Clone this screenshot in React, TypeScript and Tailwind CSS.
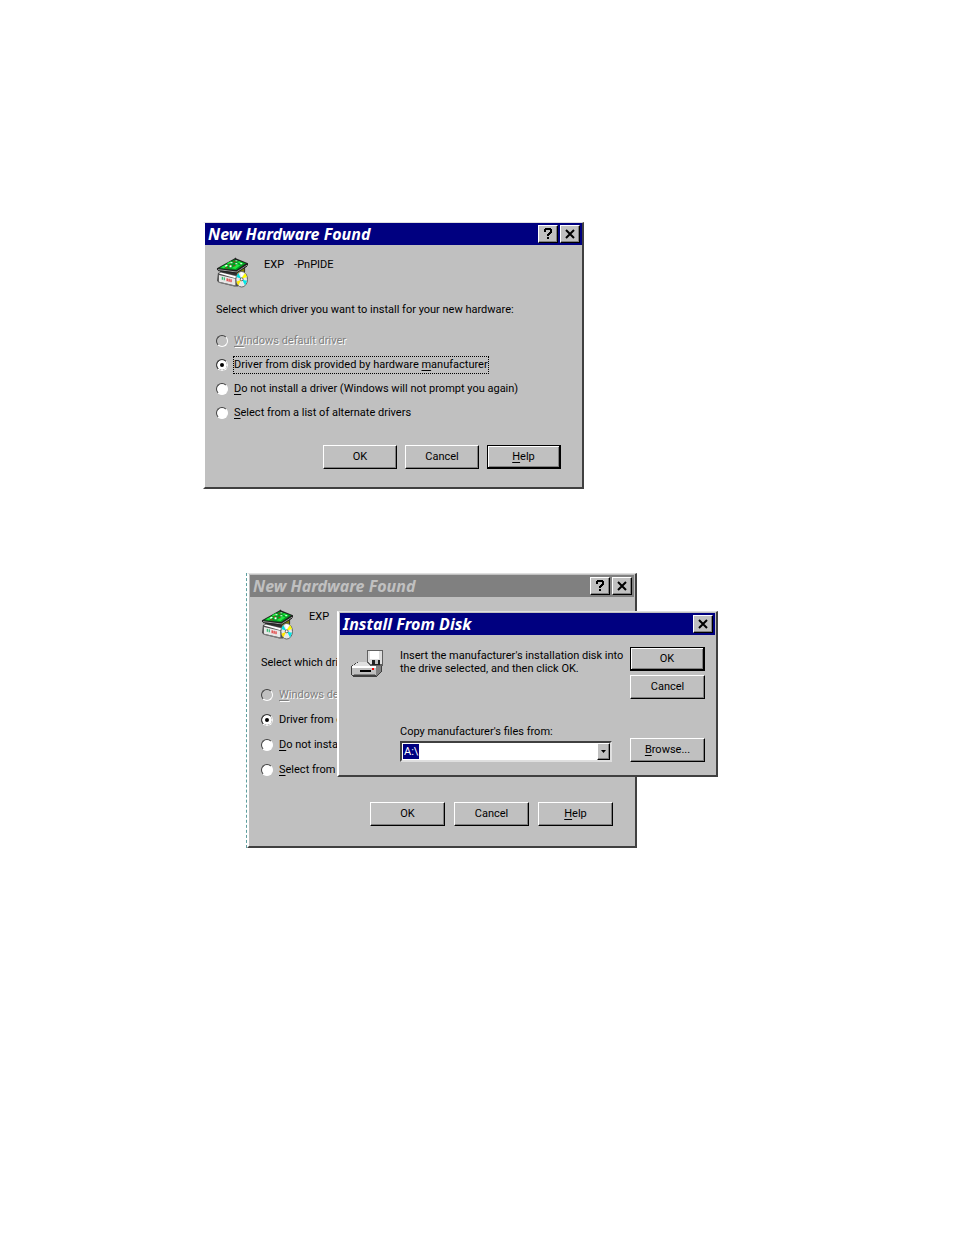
import React from "react";

type DialogProps = {
    title: string;
    inactive?: boolean;
    help?: boolean;
    className?: string;
    children: React.ReactNode;
};

const options = [
    { key: "W", rest: "indows default driver", disabled: true },
    { before: "Driver from disk provided by hardware ", key: "m", rest: "anufacturer" },
    { key: "D", rest: "o not install a driver (Windows will not prompt you again)" },
    { key: "S", rest: "elect from a list of alternate drivers" },
];

const TitleButton = ({ label, children }: { label: string; children: React.ReactNode }) => (
    <button
        type="button"
        aria-label={label}
        className="flex h-[18px] w-5 items-center justify-center border border-t-white border-l-white border-r-black border-b-black bg-[#c0c0c0] shadow-[inset_-1px_-1px_0_#808080]"
    >
        {children}
    </button>
);

const Dialog = ({ title, inactive, help, className, children }: DialogProps) => (
    <section
        className={
            "border-t border-l-2 border-r-2 border-b-2 border-t-[#dfdfdf] border-l-white border-r-[#404040] border-b-[#404040] bg-[#c0c0c0] " +
            (className || "")
        }
    >
        <header
            className={
                "flex h-[22px] items-center justify-between pr-[2px] pl-[3px] " +
                (inactive ? "bg-[#808080] text-[#c0c0c0]" : "bg-[#000080] text-white")
            }
        >
            <h2 className="font-['Noto_Sans',sans-serif] text-[16px] leading-[22px] font-bold whitespace-nowrap italic">
                {title}
            </h2>
            <div className="flex gap-[2px]">
                {help && (
                    <TitleButton label="What's this">
                        <svg width="10" height="12" viewBox="0 0 10 12" shapeRendering="crispEdges">
                            <path
                                d="M2 0h6v1h1v4H8v1H7v1H6v1H4V6h1V5h1V4h1V2H3v2H1V1h1zM4 9h2v2H4z"
                                fill="#000"
                            />
                        </svg>
                    </TitleButton>
                )}
                <TitleButton label="Close">
                    <svg width="10" height="10" viewBox="0 0 10 10">
                        <path d="M1 1l8 8M9 1L1 9" stroke="#000" strokeWidth="2" />
                    </svg>
                </TitleButton>
            </div>
        </header>
        {children}
    </section>
);

const Button = ({
    primary,
    className,
    children,
}: {
    primary?: boolean;
    className?: string;
    children: React.ReactNode;
}) => (
    <button
        type="button"
        className={
            "h-6 text-center leading-4 " +
            (primary
                ? "border border-r-2 border-b-2 border-black bg-[#c0c0c0] shadow-[inset_1px_1px_0_#fff,inset_-1px_-1px_0_#808080] "
                : "border border-t-white border-l-white border-r-black border-b-black bg-[#c0c0c0] shadow-[inset_-1px_-1px_0_#808080] ") +
            (className || "w-[75px]")
        }
    >
        {children}
    </button>
);

const HardwareIcon = () => (
    <svg width="32" height="32" viewBox="0 0 33 32" className="shrink-0" aria-hidden="true">
        {/* box under the card */}
        <path d="M4 14l18-1 8-5v7l-8 4-17-3z" fill="#303030" />
        <path d="M21 14l8-4v5l-7 3z" fill="#808000" />
        <path d="M21 13l8-4v2l-8 4z" fill="#ffffc0" />
        {/* expansion card */}
        <path d="M1 11L19 1l1-1 1 1 12 5v2L22 15 1 13z" fill="#202020" />
        <path d="M3 11L19 2l12 4-10 7z" fill="#00a020" />
        <path d="M5 10l6-3 2 1-5 3zM11 6l4-2 2 1-4 2zM16 11l6-4 3 1-5 4zM24 4l4 2-2 1-4-2z" fill="#20e840" />
        <path d="M9 8.500l2-1 1 1-2 1zM15 5h2v1h-2zM20 3h2v1h-2zM14 8h2v2h-2zM20 6h2v1h-2zM25 6h2v1h-2z" fill="#fff" />
        <path d="M10 10h2v1h-2zM13 7h2v1h-2zM18 4h2v1h-2zM18 8h2v1h-2z" fill="#c02020" />
        <path d="M2 12.500l19 2.500 11-7" fill="none" stroke="#c0c0c0" strokeWidth="0.800" />
        <path d="M2 13.500l19 2.500 11-7" fill="none" stroke="#202020" />
        {/* drive */}
        <path d="M2 16l3-1 18 4v11h-4L3 26l-2-2z" fill="#505050" />
        <path d="M3 16.500l2-1 17 4-2 2z" fill="#fff" />
        <path d="M3 18l17 4v7L3 25z" fill="#e8e8e8" />
        <path d="M6.500 20v3M8.500 20.500v3" stroke="#00b050" />
        <path d="M11.500 21.500v3M13.500 22v3M15.500 22.500v3" stroke="#e00000" />
        <path d="M3 25.500l17 4" stroke="#808080" />
        {/* disc */}
        <ellipse cx="26.500" cy="22.500" rx="6" ry="8" fill="#e8e8e8" stroke="#606060" />
        <path d="M26 22l-1-7 4 1z" fill="#fff" />
        <path d="M26 22l4-6 2 4z" fill="#ffff00" />
        <path d="M26 22l-5-2 2-4z" fill="#00e0e0" />
        <path d="M27 23l5 1-2 5z" fill="#00e8e8" />
        <path d="M26 23l-3 6-2-4z" fill="#ffe800" />
        <circle cx="26.500" cy="22.500" r="1.500" fill="#fff" stroke="#404040" strokeWidth="0.800" />
    </svg>
);

const DriveIcon = () => (
    <svg width="33" height="28" viewBox="0 0 33 28" className="shrink-0" aria-hidden="true" shapeRendering="crispEdges">
        <path d="M0 16l7-4h24v9l-5 6H2l-2-2z" fill="#404040" />
        <path d="M1 16l7-4h22l-6 4z" fill="#e0e0e0" />
        <path d="M1 17h24v8H1z" fill="#c0c0c0" />
        <path d="M25 16l5-4v9l-5 5z" fill="#808080" />
        <path d="M1 16h24v2H1z" fill="#fff" />
        <path d="M9 20h11v2H9z" fill="#000" />
        <path d="M3 24h21v1H3z" fill="#808080" />
        <path d="M21 18h2v2h-2z" fill="#f00" />
        {/* floppy */}
        <path d="M16 0h15l1 1v15H19l-3-3z" fill="#606060" />
        <path d="M17 1h14v13H19l-2-2z" fill="#dfdfdf" />
        <path d="M19 1h9v8h-9z" fill="#fff" />
        <path d="M21 10h8v5h-8z" fill="#202020" />
        <path d="M24 10h3v4h-3z" fill="#c0c0c0" />
    </svg>
);

const HardwareForm = ({ name, wide }: { name: string; wide?: boolean }) => (
    <form className={wide ? "px-[11px] pt-3 pb-[19px]" : "px-[11px] pt-3 pb-[18px]"}>
        <div className="flex items-start gap-4">
            <HardwareIcon />
            <p className="flex gap-[10px] leading-4">
                <span>EXP</span>
                <span>-PnPIDE</span>
            </p>
        </div>
        <fieldset>
            <legend className={(wide ? "pt-[14px]" : "pt-[13px]") + " whitespace-nowrap"}>
                Select which driver you want to install for your new hardware:
            </legend>
            <div className="pt-[11px]">
                {options.map((option, i) => (
                    <div
                        key={option.key}
                        className={(wide ? "h-[25px]" : "h-6") + " flex items-center gap-[6px]"}
                    >
                        <input
                            type="radio"
                            id={name + i}
                            name={name}
                            disabled={option.disabled}
                            defaultChecked={i === 1}
                            className="size-3 shrink-0 appearance-none rounded-full border border-t-[#404040] border-r-white border-b-white border-l-[#404040] bg-white checked:bg-black checked:shadow-[inset_0_0_0_3px_#fff] disabled:bg-[#c0c0c0]"
                        />
                        <label
                            htmlFor={name + i}
                            className={
                                "leading-4 whitespace-nowrap " +
                                (option.disabled ? "text-[#808080] [text-shadow:1px_1px_0_#fff] " : "") +
                                (i === 1 && !wide ? "outline outline-dotted outline-black" : "")
                            }
                        >
                            {option.before}
                            <u className="underline-offset-2">{option.key}</u>
                            {option.rest}
                        </label>
                    </div>
                ))}
            </div>
        </fieldset>
        <div className={(wide ? "gap-[9px]" : "gap-2") + " flex justify-end pt-5 pr-[10px]"}>
            <Button className={wide ? "w-[75px]" : "w-[74px]"}>OK</Button>
            <Button className={wide ? "w-[75px]" : "w-[74px]"}>Cancel</Button>
            <Button primary={!wide} className={wide ? "w-[75px]" : "w-[74px]"}>
                <u className="underline-offset-2">H</u>elp
            </Button>
        </div>
    </form>
);

const App = () => {
    return (
        <main className="bg-white pt-[222px] pb-12 pl-[203px] font-[Roboto,sans-serif] text-[11px] leading-4 text-black">
            <Dialog title="New Hardware Found" help className="w-full max-w-[381px]">
                <HardwareForm name="driver" />
            </Dialog>

            <div className="relative mt-[84px] ml-[43px] w-full max-w-[391px]">
                <div className="border-l border-dashed border-[#5f9f9f]">
                    <Dialog title="New Hardware Found" inactive help className="p-[1px]">
                        <HardwareForm name="driver-behind" wide />
                    </Dialog>
                </div>

                <Dialog
                    title="Install From Disk"
                    className="absolute top-[38px] left-[91px] w-[381px] p-[1px]"
                >
                    <form className="flex justify-between pt-3 pr-[10px] pb-3 pl-[11px]">
                        <div className="flex gap-4">
                            <div className="pt-[3px]">
                                <DriveIcon />
                            </div>
                            <div className="flex w-[212px] flex-col justify-between">
                                <p className="pt-[2px] leading-[13px] whitespace-nowrap">
                                    Insert the manufacturer's installation disk into
                                    <br />
                                    the drive selected, and then click OK.
                                </p>
                                <div>
                                    <label htmlFor="source">Copy manufacturer's files from:</label>
                                    <div className="relative mt-[1px]">
                                        <select
                                            id="source"
                                            className="block h-[21px] w-full appearance-none border-2 border-t-[#404040] border-r-[#dfdfdf] border-b-[#dfdfdf] border-l-[#404040] bg-white bg-[linear-gradient(#000080,#000080)] bg-[length:16px_15px] bg-[position:1px_1px] bg-no-repeat px-[2px] leading-4 text-white"
                                        >
                                            <option>A:\</option>
                                        </select>
                                        <span className="pointer-events-none absolute inset-y-[2px] right-[2px] flex w-[13px] items-center justify-center border border-t-white border-r-black border-b-black border-l-white bg-[#c0c0c0] shadow-[inset_-1px_-1px_0_#808080]">
                                            <svg width="5" height="3" viewBox="0 0 5 3">
                                                <path d="M0 0h5L2.500 3z" fill="#000" />
                                            </svg>
                                        </span>
                                    </div>
                                </div>
                            </div>
                        </div>
                        <div className="flex flex-col">
                            <Button primary>OK</Button>
                            <Button className="mt-1 w-[75px]">Cancel</Button>
                            <Button className="mt-[39px] w-[75px]">
                                <u className="underline-offset-2">B</u>rowse...
                            </Button>
                        </div>
                    </form>
                </Dialog>
            </div>
        </main>
    );
};

export default App;
